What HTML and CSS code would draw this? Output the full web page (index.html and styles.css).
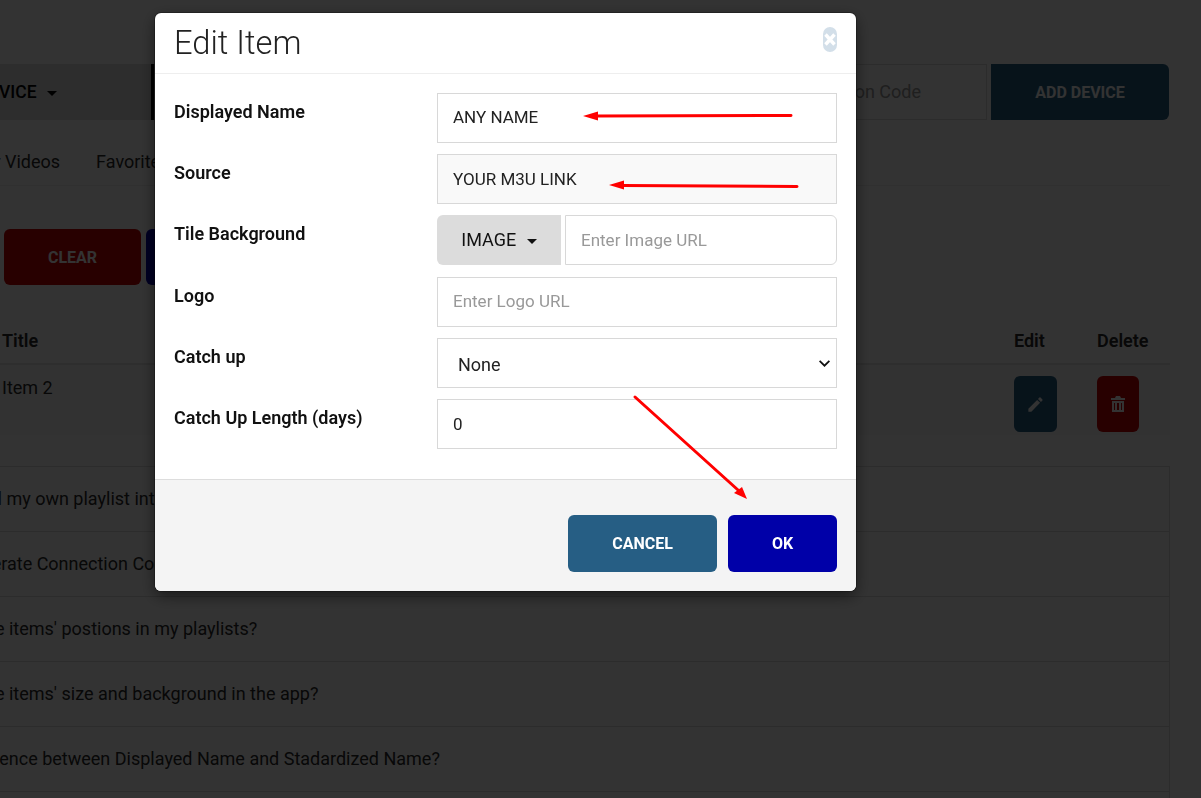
FILE: index.html
```html
<!DOCTYPE html>
<html lang="en">
<head>
    <meta charset="UTF-8">
    <title>Edit Item</title>
    <link rel="stylesheet" href="styles.css">
</head>
<body>
    <div class="page">
        <div class="device-bar">
            <div class="device-select">SELECT DEVICE <span class="caret"></span></div>
            <div class="device-code">Connection Code</div>
            <div class="add-device">ADD DEVICE</div>
        </div>

        <div class="tabs">
            <span>Your Videos</span>
            <span>Favorites</span>
        </div>

        <div class="actions">
            <div class="action-btn clear-btn">CLEAR</div>
            <div class="action-btn blue-btn"></div>
        </div>

        <div class="table-row table-head">
            <div>Title</div>
            <div>Edit</div>
            <div>Delete</div>
        </div>
        <div class="table-row table-item">
            <div class="item-title">Item 2</div>
            <div>
                <div class="icon-btn edit-btn">
                    <svg viewBox="0 0 24 24" width="19" height="19"><path fill="#fff" d="M3 17.25V21h3.75L17.81 9.94l-3.75-3.75L3 17.25zM20.71 7.04a1 1 0 0 0 0-1.41l-2.34-2.34a1 1 0 0 0-1.41 0l-1.83 1.83 3.75 3.75 1.83-1.83z"/></svg>
                </div>
            </div>
            <div>
                <div class="icon-btn delete-btn">
                    <svg viewBox="0 0 14 16" width="14" height="16"><path fill="#fff" d="M5 0h4l1 2h4v2H0V2h4zM1 5h12v11H1zm2 2v7h1V7zm3 0v7h2V7zm4 0v7h1V7z" fill-rule="evenodd"/></svg>
                </div>
            </div>
        </div>

        <div class="faq">
            <div class="faq-item">How should I add my own playlist into the app?</div>
            <div class="faq-item">How could I generate Connection Code?</div>
            <div class="faq-item">Shall I change the items' postions in my playlists?</div>
            <div class="faq-item">Shall I change the items' size and background in the app?</div>
            <div class="faq-item">What is the difference between Displayed Name and Stadardized Name?</div>
            <div class="faq-item"></div>
        </div>
    </div>

    <div class="backdrop">
        <div class="modal">
            <div class="modal-header">
                <h2>Edit Item</h2>
                <svg class="close-icon" viewBox="0 0 14 25" width="14" height="25">
                    <rect width="14" height="25" rx="7" fill="#d3dfe9"/>
                    <path d="M2.500 7.500l9 10M11.500 7.500l-9 10" stroke="#fff" stroke-width="3.400"/>
                </svg>
            </div>
            <div class="modal-body">
                <div class="form-row">
                    <label>Displayed Name</label>
                    <input type="text" class="input-up" value="ANY NAME">
                </div>
                <div class="form-row">
                    <label>Source</label>
                    <input type="text" class="source-input" value="YOUR M3U LINK">
                </div>
                <div class="form-row form-row-group">
                    <label>Tile Background</label>
                    <div class="input-group">
                        <div class="image-btn">IMAGE <span class="caret"></span></div>
                        <input type="text" placeholder="Enter Image URL">
                    </div>
                </div>
                <div class="form-row">
                    <label>Logo</label>
                    <input type="text" class="input-up" placeholder="Enter Logo URL">
                </div>
                <div class="form-row">
                    <label>Catch up</label>
                    <select><option>None</option></select>
                </div>
                <div class="form-row">
                    <label>Catch Up Length (days)</label>
                    <input type="text" value="0">
                </div>
            </div>
            <div class="modal-footer">
                <button class="cancel-btn">CANCEL</button>
                <button class="ok-btn">OK</button>
            </div>
        </div>
    </div>

    <svg class="arrows" width="1201" height="798" viewBox="0 0 1201 798">
        <path d="M791 115.500L596 116" stroke="#f00" stroke-width="3" stroke-linecap="round"/>
        <path d="M583 116l15-4.500v9z" fill="#f00"/>
        <path d="M797 186.500L622 185.500" stroke="#f00" stroke-width="3" stroke-linecap="round"/>
        <path d="M609 185l15-4.500v9z" fill="#f00"/>
        <path d="M635 397L738 490" stroke="#f00" stroke-width="3" stroke-linecap="round"/>
        <path d="M747 499L734 493l8-6z" fill="#f00"/>
    </svg>
</body>
</html>
```

FILE: styles.css
```css
* {
    box-sizing: border-box;
}
html, body {
    height: 100%;
}
body {
    margin: 0;
    overflow: hidden;
    background: #fff;
    color: #2a2a2a;
    font-family: Roboto, "Liberation Sans", sans-serif;
    font-size: 18px;
}
.caret {
    display: inline-block;
    width: 0;
    height: 0;
    margin-left: 6px;
    vertical-align: middle;
    border-top: 5px solid currentColor;
    border-left: 5px solid transparent;
    border-right: 5px solid transparent;
}

/* page under the dialog */
.page {
    width: 1320px;
    margin-left: -150px;
    padding-top: 64px;
}
.device-bar {
    display: flex;
    height: 56px;
    margin-right: 1px;
}
.device-select {
    width: 304px;
    padding-left: 60px;
    background: #e0e0e0;
    border-right: 3px solid #000;
    color: #000;
    font-size: 17.5px;
    font-weight: 500;
    line-height: 56px;
    white-space: nowrap;
    text-align: right;
    padding-right: 94px;
}
.device-code {
    flex: 1;
    border: 1px solid #ddd;
    color: #999;
    line-height: 54px;
    text-align: right;
    padding-right: 65px;
}
.add-device {
    width: 178px;
    margin-left: 4px;
    background: #265e84;
    border-radius: 0 6px 6px 0;
    color: #fff;
    font-weight: 700;
    font-size: 16px;
    line-height: 58px;
    text-align: center;
}
.tabs {
    display: flex;
    gap: 36px;
    height: 66px;
    padding: 30px 0 0 114px;
    border-bottom: 1px solid #eee;
    line-height: 24px;
}
.actions {
    display: flex;
    gap: 5px;
    margin-top: 43px;
    padding-left: 154px;
}
.action-btn {
    width: 137px;
    height: 56px;
    border-radius: 6px;
    color: #fff;
    font-size: 16px;
    font-weight: 700;
    line-height: 58px;
    text-align: center;
}
.clear-btn {
    background: #c80000;
}
.blue-btn {
    width: 100px;
    background: #0000a8;
}
.table-row {
    display: grid;
    grid-template-columns: 1fr 83px 73px;
    padding-left: 152px;
}
.table-head {
    height: 49px;
    margin-top: 31px;
    border-bottom: 2px solid #e4e4e4;
    font-weight: 600;
    line-height: 50px;
}
.table-item {
    height: 70px;
    background: #fafafa;
}
.item-title {
    padding-top: 12px;
}
.icon-btn {
    display: flex;
    align-items: center;
    justify-content: center;
    width: 43px;
    height: 56px;
    margin-top: 11px;
    border-radius: 6px;
}
.edit-btn {
    background: #265e84;
}
.delete-btn {
    width: 42px;
    background: #c80000;
}
.faq {
    margin-top: 31px;
    border: 1px solid #ddd;
}
.faq-item {
    height: 65px;
    padding-left: 12px;
    border-bottom: 1px solid #ddd;
    line-height: 64px;
}

/* dialog */
.backdrop {
    position: fixed;
    top: 0;
    left: 0;
    right: 0;
    bottom: 0;
    padding: 13px 0 0 155px;
    background: rgba(0, 0, 0, 0.8);
}
.modal {
    width: 701px;
    background: #fff;
    border-radius: 6px;
    box-shadow: 0 0 0 1px rgba(0, 0, 0, 0.25), 0 5px 15px rgba(0, 0, 0, 0.5);
    overflow: hidden;
}
.modal-header {
    display: flex;
    justify-content: space-between;
    height: 61px;
    padding: 0 19px;
    border-bottom: 1px solid #eee;
}
.modal-header h2 {
    margin: 0;
    color: #222;
    font-size: 32.7px;
    font-weight: 300;
    line-height: 61px;
}
.close-icon {
    margin-top: 14px;
}
.modal-body {
    height: 405px;
    padding: 19px 19px 0;
}
.form-row {
    display: flex;
    height: 50px;
    margin-bottom: 11px;
}
.form-row-group {
    margin-bottom: 12px;
}
.form-row label {
    width: 263px;
    color: #111;
    font-weight: 600;
    line-height: 38px;
}
.form-row input,
.form-row select {
    width: 400px;
    height: 50px;
    padding: 0 15px;
    background: #fff;
    border: 1px solid #d8d8d8;
    border-radius: 0;
    color: #222;
    font-family: Roboto, "Liberation Sans", sans-serif;
    font-size: 17px;
}
.form-row select {
    appearance: none;
    padding: 3px 20px 0;
    background: #fff url("data:image/svg+xml,%3Csvg xmlns='http://www.w3.org/2000/svg' width='11' height='7' viewBox='0 0 11 7'%3E%3Cpath fill='none' stroke='%23111' stroke-width='1.8' d='M.6.8l4.900 4.900L10.400.8'/%3E%3C/svg%3E") no-repeat right 6px center;
    font-size: 18px;
}
.form-row input::placeholder {
    color: #999;
}
.form-row .input-up {
    padding-bottom: 2px;
}
.form-row .source-input {
    background: #f9f9f9;
}
.input-group {
    display: flex;
    width: 400px;
    gap: 4px;
}
.image-btn {
    width: 124px;
    height: 50px;
    background: #dcdcdc;
    border-radius: 6px 0 0 6px;
    color: #111;
    line-height: 50px;
    text-align: center;
}
.form-row .input-group input {
    flex: 1;
    width: auto;
    border-radius: 0 6px 6px 0;
}
.modal-footer {
    display: flex;
    justify-content: flex-end;
    gap: 11px;
    height: 112px;
    padding: 35px 19px 0;
    background: #f4f4f4;
    border-top: 1px solid #ddd;
}
.modal-footer button {
    height: 57px;
    border: none;
    border-radius: 6px;
    color: #fff;
    font-family: Roboto, "Liberation Sans", sans-serif;
    font-size: 16px;
    font-weight: 700;
}
.cancel-btn {
    width: 149px;
    background: #265e84;
}
.ok-btn {
    width: 109px;
    background: #0000a8;
}

/* red marks drawn on the screenshot */
.arrows {
    position: fixed;
    top: 0;
    left: 0;
}
```
